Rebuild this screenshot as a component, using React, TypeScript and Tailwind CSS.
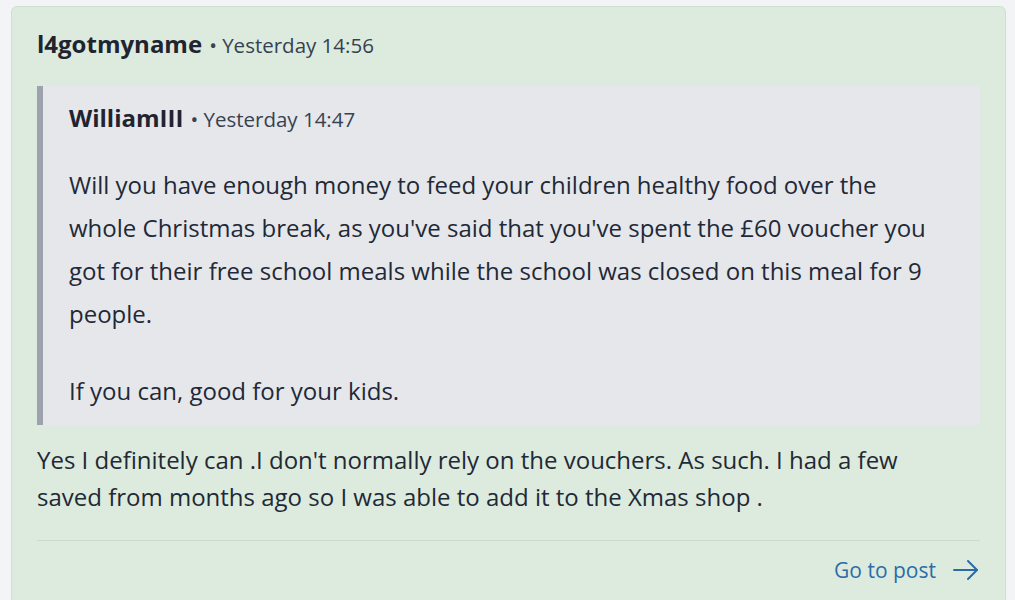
function ArrowRight() {
  return (
    <svg width="28" height="22" viewBox="0 0 28 22" fill="none" stroke="currentColor" strokeWidth={2} strokeLinecap="round" strokeLinejoin="round">
      <path d="M2 11h23" />
      <path d="M16 2l9 9-9 9" />
    </svg>
  );
}

export default function App() {
  return (
    <div className="min-h-[600px] bg-[#f3f4f6] pl-[11px] pr-[9px] pt-[6px] text-[#1f2937]" style={{ fontFamily: '"Open Sans", sans-serif' }}>
      <div className="rounded-t-[6px] border border-[#cfe0d1] bg-[#dcebdd] px-[25px] pt-[21px] pb-[20px]">
        {/* Header */}
        <div className="flex items-baseline leading-[32px]">
          <span className="text-[24px] font-bold text-[#1f2430]">l4gotmyname</span>
          <span className="ml-[7px] text-[20.5px] text-[#374151]">• Yesterday 14:56</span>
        </div>

        {/* Quote */}
        <div className="mt-[25px] border-l-[6px] border-[#9ca3af] bg-[#e5e7eb] pl-[26px] pr-[50px] pt-[16px] pb-[13px]">
          <div className="flex items-baseline leading-[32px]">
            <span className="text-[24px] font-bold text-[#1f2430]">WilliamIII</span>
            <span className="ml-[7px] text-[20.5px] text-[#374151]">• Yesterday 14:47</span>
          </div>
          <div className="mt-[28px] text-[24px] leading-[43px]">
            <p>
              Will you have enough money to feed your children healthy food over the whole Christmas break, as you've said that you've spent the £60 voucher you got for their free school meals while the school was closed on this meal for 9 people.
            </p>
            <p className="mt-[34px]">If you can, good for your kids.</p>
          </div>
        </div>

        {/* Reply */}
        <p className="mt-[16px] pr-[60px] text-[24px] leading-[37px]">
          Yes I definitely can .I don't normally rely on the vouchers. As such. I had a few saved from months ago so I was able to add it to the Xmas shop .
        </p>

        <div className="mt-[25px] border-t border-[#cadbcb]" />

        <div className="flex justify-end pt-[13px]">
          <a href="#" className="flex items-center gap-[16px] text-[21px] leading-[32px] text-[#2b6ca8]">
            Go to post
            <ArrowRight />
          </a>
        </div>
      </div>
    </div>
  );
}
